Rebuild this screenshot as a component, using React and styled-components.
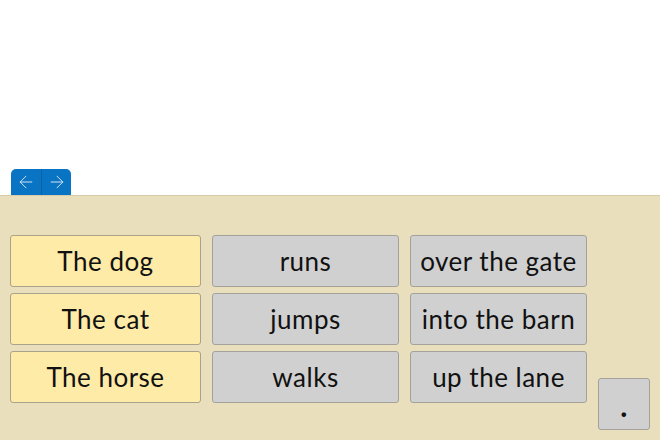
import React from "react";
import styled, { createGlobalStyle } from "styled-components";
import { ArrowLeft, ArrowRight } from "lucide-react";

const Global = createGlobalStyle`
  html, body { margin: 0; padding: 0; background: #fff; }
  body { font-family: Lato, "Open Sans", sans-serif; }
  #root { height: 440px; }
`;

const Page = styled.div`
  width: 660px;
  height: 440px;
  display: flex;
  flex-direction: column;
  overflow: hidden;
`;

const Top = styled.div`
  flex: 0 0 169px;
`;

const TabBar = styled.div`
  display: flex;
  padding-left: 11px;
  height: 26px;
`;

const NavTabs = styled.div`
  display: flex;
  background: #0a74c4;
  border-radius: 5px 5px 0 0;
  overflow: hidden;
`;

const NavButton = styled.button`
  width: 30px;
  height: 26px;
  border: none;
  padding: 0;
  margin: 0;
  background: transparent;
  color: #cfe2f4;
  display: flex;
  align-items: center;
  justify-content: center;
  border-left: ${(p) => (p.$divider ? "1px solid #0963a8" : "none")};
`;

const Panel = styled.div`
  flex: 1;
  background: #e9dfbd;
  border-top: 1px solid #d5cba9;
  display: flex;
  align-items: flex-start;
  gap: 11px;
  padding: 39px 0 10px 10px;
`;

const Column = styled.div`
  display: flex;
  flex-direction: column;
  gap: 6px;
  width: ${(p) => p.$w}px;
`;

const Card = styled.div`
  box-sizing: border-box;
  height: 52px;
  display: flex;
  align-items: center;
  justify-content: center;
  border-radius: 3px;
  border: 1px solid ${(p) => (p.$subject ? "#aaa28a" : "#a3a19a")};
  background: ${(p) => (p.$subject ? "#feeba7" : "#d0d0d0")};
  color: #111;
  font-size: 26px;
  letter-spacing: 0.5px;
  padding-bottom: 1px;
`;

const Stop = styled(Card)`
  width: 52px;
  height: 52px;
  align-self: flex-end;
  padding-top: 2px;
  font-size: 30px;
  font-weight: 700;
`;

const subjects = ["The dog", "The cat", "The horse"];
const verbs = ["runs", "jumps", "walks"];
const places = ["over the gate", "into the barn", "up the lane"];

export default function App() {
  return (
    <Page>
      <Global />
      <Top />
      <TabBar>
        <NavTabs>
          <NavButton aria-label="previous">
            <ArrowLeft size={20} strokeWidth={1.2} />
          </NavButton>
          <NavButton $divider aria-label="next">
            <ArrowRight size={20} strokeWidth={1.2} />
          </NavButton>
        </NavTabs>
      </TabBar>
      <Panel>
        <Column $w={191}>
          {subjects.map((t) => (
            <Card key={t} $subject>{t}</Card>
          ))}
        </Column>
        <Column $w={187}>
          {verbs.map((t) => (
            <Card key={t}>{t}</Card>
          ))}
        </Column>
        <Column $w={177}>
          {places.map((t) => (
            <Card key={t}>{t}</Card>
          ))}
        </Column>
        <Stop>.</Stop>
      </Panel>
    </Page>
  );
}
